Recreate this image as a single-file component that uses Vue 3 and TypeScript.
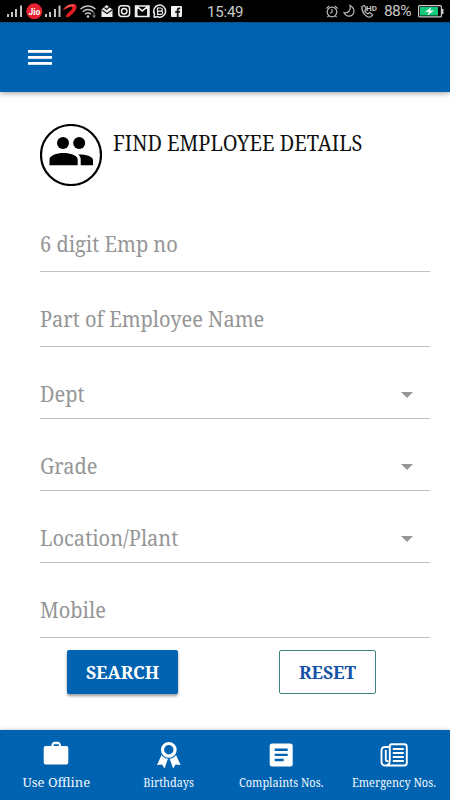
<script setup lang="ts">
interface Field {
  id: string
  label: string
  select: boolean
}

const fields: Field[] = [
  { id: 'emp', label: '6 digit Emp no', select: false },
  { id: 'name', label: 'Part of Employee Name', select: false },
  { id: 'dept', label: 'Dept', select: true },
  { id: 'grade', label: 'Grade', select: true },
  { id: 'plant', label: 'Location/Plant', select: true },
  { id: 'mobile', label: 'Mobile', select: false },
]
</script>

<template>
  <div class="screen">
    <div class="status">
      <div class="status-left">
        <svg width="186" height="22" viewBox="0 0 186 22">
          <g fill="#c4c4c4">
            <path d="M7 14h2v3H7zM11 12h2v5h-2zM15 9h2v8h-2zM20 5.500h2V17h-2z" />
            <path d="M45 14h2v3h-2zM49 12h2v5h-2zM54 9h2v8h-2zM58.500 5.500h2V17h-2z" />
          </g>
          <circle cx="34.300" cy="11.300" r="8" fill="#e8222e" />
          <text x="34.300" y="14.500" class="jio" text-anchor="middle">Jio</text>
          <path d="M62.800 10.500C64 5.500 73 2 76 5c2.500 3-2.500 8.500-6.500 11.500-3 2-5 0-2-3 3-2.500 5.500-5 4.500-6-1.500-1.500-5.500 1-9.200 3z" fill="#e51c23" />
          <path d="M65 8.500c2-2.500 6-4 9-3" fill="none" stroke="#ff8b80" />
          <g fill="none" stroke="#c8c8c8" stroke-width="1.500">
            <path d="M80.500 9c4.500-4 10.500-4 15 0M82.700 11.700c3.500-3 7-3 10.500 0M85 14.300c2-1.700 4-1.700 6 0" />
          </g>
          <circle cx="88" cy="16.500" r="1.300" fill="#ccc" />
          <path d="M94 12v5M92.500 15.500l1.500 2 1.500-2" fill="none" stroke="#999" />
          <path d="M101.500 9.500l5-4.500 6 4.500v7.500h-11z" fill="#eee" />
          <path d="M102 10l5 3.500 5-3.500M104.500 7.500l2 2 4-3.500" fill="none" stroke="#111" stroke-width="1.100" />
          <g fill="none" stroke="#eee" stroke-width="1.500">
            <rect x="118.800" y="5.800" width="10.800" height="10.800" rx="3" />
            <circle cx="124.200" cy="11.200" r="2.700" />
            <path d="M136.800 16.500V6.300l5.500 4.600 5.500-4.600v10.200M135.500 6h13.500v10.500h-13.500z" />
            <path d="M155.500 17.200l-1.500-.5.500-2.500a6 6 0 1 1 2.500 2.300z" />
          </g>
          <path d="M157.500 8h3.300a1.600 1.600 0 0 1 0 3.200h-3.300zm0 3.200h3.600a1.600 1.600 0 0 1 0 3.200h-3.600z" fill="none" stroke="#eee" stroke-width="1.200" />
          <rect x="171" y="6" width="11" height="11" rx="1" fill="#f4f4f4" />
          <path d="M176.800 17v-4.200h-1.600v-1.700h1.600v-1c0-1.700.8-2.500 2.600-2.500h.9v1.600h-.8c-.7 0-.9.3-.9.900v1h1.600l-.2 1.700h-1.400V17z" fill="#111" />
        </svg>
      </div>
      <span class="clock">15:49</span>
      <svg class="status-icons" width="54" height="22" viewBox="0 0 54 22">
        <g fill="none" stroke="#b9b9b9" stroke-width="1.200">
          <circle cx="7" cy="12" r="4.800" />
          <path d="M7 9v3.200l-2 .8M1.500 8.500l2.700-2.700M9.800 5.800l2.700 2.700M3.800 15.700l-1.300 1.500M10.200 15.700l1.300 1.500" />
          <path d="M25 5.500c1.500 4-1.500 8-6 7.300 1.500 3.800 6 4.500 8.800 1.700C30.500 11.500 28.500 7 25 5.500z" />
          <path d="M37 6.500l2.300-1 2 3.500-1.500 1.500c.5 2 1.800 3 3.200 3.300l1.600-1.300 3 2.300-1.500 2c-4.500 2-10-5.300-9.100-10.300z" />
        </g>
        <text x="41" y="11" class="hd">HD</text>
      </svg>
      <span class="percent">88%</span>
      <svg class="battery" width="27" height="22" viewBox="0 0 27 22">
        <rect x=".6" y="5.600" width="22.800" height="11.300" rx="1" fill="none" stroke="#ccc" stroke-width="1.200" />
        <rect x="2" y="7" width="18" height="8.500" fill="#12c97b" />
        <path d="M24 9h1.500v5H24z" fill="#ccc" />
        <path d="M13.500 7L7 12h4l-1.500 3.500L16 10.500h-4z" fill="#fff" />
      </svg>
    </div>

    <header class="toolbar">
      <button class="menu" aria-label="Menu"><i></i><i></i><i></i></button>
    </header>

    <main class="content">
      <div class="heading">
        <div class="avatar">
          <svg width="62" height="62" viewBox="0 0 62 62">
            <circle cx="31" cy="31" r="30" fill="none" stroke="#000" stroke-width="2.200" />
            <circle cx="23" cy="19" r="6" />
            <circle cx="39.200" cy="19" r="6" />
            <path d="M9.500 41.300v-5.800c0-4 7-6.500 14-6.500s14.200 2.500 14.200 6.500v5.800zM40.700 41.300v-5.800c0-2-1-3.600-2.500-5 6-.3 14.800 1.500 14.800 5.500v5.300z" />
          </svg>
        </div>
        <h1>FIND EMPLOYEE DETAILS</h1>
      </div>

      <form @submit.prevent>
        <div v-for="f in fields" :key="f.id" class="field" :class="{ select: f.select }">
          <span class="label">{{ f.label }}</span>
          <i v-if="f.select" class="arrow"></i>
        </div>
        <div class="actions">
          <button class="search"><span>SEARCH</span></button>
          <button class="reset"><span>RESET</span></button>
        </div>
      </form>
    </main>

    <nav class="tabs">
      <a class="tab active">
        <svg width="30" height="30" viewBox="0 0 30 30">
          <path fill-rule="evenodd" fill="#fff" d="M10.500 7V5l2-2.200h5.300l2 2.200v2h5.500q2 0 2 2v14.500q0 2-2 2H4.700q-2 0-2-2V9q0-2 2-2zm2.300 0h5V5.200h-5z" />
        </svg>
        <span>Use Offline</span>
      </a>
      <a class="tab">
        <svg width="30" height="30" viewBox="0 0 30 30">
          <path fill="#fff" d="M8 15l6 4.500-3.500 10-2.500-4-5 .5zM21.600 15l-6 4.500 3.500 10 2.500-4 5 .5z" />
          <circle cx="14.800" cy="10.800" r="6.300" fill="#0063b1" stroke="#0063b1" stroke-width="5.500" />
          <circle cx="14.800" cy="10.800" r="6.300" fill="#0063b1" stroke="#fff" stroke-width="3.200" />
        </svg>
        <span>Birthdays</span>
      </a>
      <a class="tab">
        <svg width="30" height="30" viewBox="0 0 30 30">
          <rect x="3.700" y="4.500" width="23" height="23" rx="2.500" fill="#fff" />
          <path fill="none" stroke="#0063b1" stroke-width="2.400" d="M8.700 10.800h13M8.700 15.900h13M8.700 21h9" />
        </svg>
        <span>Complaints Nos.</span>
      </a>
      <a class="tab">
        <svg width="30" height="30" viewBox="0 0 30 30">
          <g fill="none" stroke="#fff" stroke-width="1.900">
            <path d="M10.800 22V7.200q0-2 2-2h12.500q2.500 0 2.500 2.500v16.300q0 2.500-2.500 2.500H6.300q-3.800 0-3.800-3.800V11.500q0-3.500 3.500-3.500h4.800M10.800 21q0 5-3 5M6.800 11v9.500q0 2 2.500 1.500" />
            <path d="M13.800 10h11M13.800 14h11M13.800 18h11M13.800 22h11" />
          </g>
        </svg>
        <span>Emergency Nos.</span>
      </a>
    </nav>
  </div>
</template>

<style>
body {
  margin: 0;
  background: #fff;
}
</style>

<style scoped>
.screen {
  width: 450px;
  height: 800px;
  display: flex;
  flex-direction: column;
  overflow: hidden;
  background: #fff;
  font-family: "Noto Serif", "DejaVu Serif Condensed", "DejaVu Serif", serif;
}
button {
  font: inherit;
  border: 0;
  padding: 0;
  background: none;
}
.status {
  height: 22px;
  flex: none;
  display: flex;
  background: #000;
  color: #c9c9c9;
  font: 15.500px/23px Roboto, sans-serif;
}
.status-left {
  width: 207px;
}
.status svg {
  display: block;
}
.jio {
  font: bold 8.500px Roboto, sans-serif;
  fill: #fff;
}
.clock {
  width: 118px;
  font-size: 15px;
  line-height: 24px;
  letter-spacing: -0.2px;
}
.hd {
  font: bold 8px Roboto, sans-serif;
  fill: #c4c4c4;
}
.percent {
  width: 34px;
  margin-left: 5px;
  letter-spacing: -0.6px;
}
.toolbar {
  height: 70px;
  flex: none;
  display: flex;
  align-items: center;
  padding-left: 28px;
  background: #0063b1;
  border-top: 1px solid #07508b;
  box-sizing: border-box;
  box-shadow: 0 1px 6px rgba(0, 0, 0, 0.4);
}
.menu {
  display: flex;
  flex-direction: column;
  gap: 3px;
  width: 24px;
}
.menu i {
  height: 3px;
  background: linear-gradient(#fff 67%, #d5e3f2 67%);
}
.content {
  flex: 1;
  padding: 32px 20px 0 40px;
}
.heading {
  display: flex;
  height: 73px;
}
.avatar {
  width: 73px;
}
h1 {
  margin: 4px 0 0;
  font-size: 21px;
  line-height: 30px;
  font-weight: 400;
  color: #111;
  white-space: nowrap;
  transform: scaleX(0.952);
  transform-origin: left;
}
.field {
  box-sizing: border-box;
  height: 75px;
  display: flex;
  align-items: flex-end;
  justify-content: space-between;
  padding-bottom: 12px;
  border-bottom: 1px solid #c2c2c2;
}
.field.select {
  height: 72px;
  padding-bottom: 9px;
}
.label {
  font-size: 21px;
  line-height: 30px;
  color: #969696;
  white-space: nowrap;
  transform: scaleX(0.953);
  transform-origin: left;
}
.arrow {
  border: 6px solid transparent;
  border-top-color: #969696;
  border-bottom: 0;
  margin: 0 17px 11px 0;
}
.actions {
  display: flex;
  justify-content: space-between;
  padding: 12px 54px 0 27px;
  font-size: 18.500px;
  font-weight: 700;
}
.actions span {
  display: block;
  padding-bottom: 2px;
  transform: scaleX(0.95);
}
.search {
  width: 111px;
  height: 44px;
  border-radius: 2px;
  background: #0063b1;
  color: #fff;
  box-shadow: 0 2px 3px rgba(0, 0, 0, 0.4);
}
.reset {
  width: 97px;
  height: 44px;
  border: 1px solid #3f8380;
  border-radius: 2px;
  color: #1452a5;
}
.tabs {
  height: 70px;
  flex: none;
  display: flex;
  background: #0063b1;
  box-shadow: 0 0 4px rgba(0, 0, 0, 0.25);
}
.tab {
  flex: 1;
  display: flex;
  flex-direction: column;
  align-items: center;
  padding-top: 9px;
  color: #f2f8ff;
  font-size: 12px;
  line-height: 20px;
  white-space: nowrap;
}
.tab span {
  margin-top: 4px;
  transform: scaleX(0.915);
}
.tab.active span {
  margin-top: 3px;
  font-size: 13px;
  transform: none;
}
</style>
